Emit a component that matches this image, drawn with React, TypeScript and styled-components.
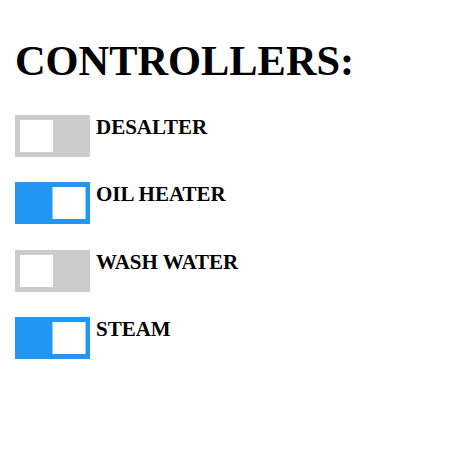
import React, { useState } from "react";
import styled, { createGlobalStyle } from "styled-components";

const Global = createGlobalStyle`
  html, body { margin: 0; padding: 0; background: #fff; }
  body { font-family: "Liberation Serif", "Times New Roman", serif; color: #000; }
`;

const Page = styled.div`
  padding: 0 15px;
`;

const Title = styled.h1`
  margin: 37px 0 30px;
  font-size: 42.4px;
  font-weight: bold;
  line-height: 48px;
`;

const List = styled.div`
  display: flex;
  flex-direction: column;
  gap: 25.33px;
`;

const Row = styled.div`
  display: flex;
  align-items: flex-start;
  gap: 6px;
`;

const Track = styled.button<{ $on: boolean }>`
  position: relative;
  width: 75px;
  height: 42px;
  padding: 0;
  border: none;
  cursor: pointer;
  flex-shrink: 0;
  background: ${(p) => (p.$on ? "#2196f3" : "#cccccc")};
`;

const Knob = styled.span<{ $on: boolean }>`
  position: absolute;
  top: 5px;
  left: 5px;
  width: 33px;
  height: 32px;
  background: #fff;
  transform: translateX(${(p) => (p.$on ? "32.5px" : "0")});
`;

const Label = styled.span`
  padding-top: 1px;
  font-size: 21px;
  font-weight: bold;
  line-height: 23px;
`;

const initial = [
  { name: "DESALTER", on: false },
  { name: "OIL HEATER", on: true },
  { name: "WASH WATER", on: false },
  { name: "STEAM", on: true },
];

export default function App() {
  const [items, setItems] = useState(initial);
  return (
    <Page>
      <Global />
      <Title>CONTROLLERS:</Title>
      <List>
        {items.map((it, i) => (
          <Row key={it.name}>
            <Track
              $on={it.on}
              aria-pressed={it.on}
              onClick={() =>
                setItems((s) => s.map((x, j) => (j === i ? { ...x, on: !x.on } : x)))
              }
            >
              <Knob $on={it.on} />
            </Track>
            <Label>{it.name}</Label>
          </Row>
        ))}
      </List>
    </Page>
  );
}
